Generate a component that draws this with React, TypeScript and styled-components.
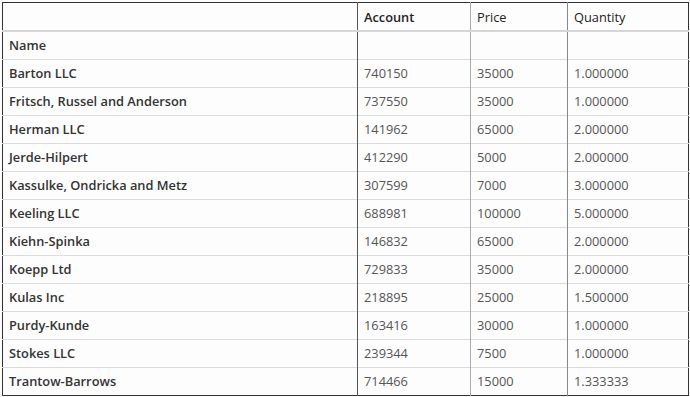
import React from 'react';
import styled, { createGlobalStyle } from 'styled-components';

const GlobalStyle = createGlobalStyle`
  body {
    margin: 0;
    background: #fdfdfd;
    font-family: "Open Sans", "Noto Sans", sans-serif;
  }
`;

const Wrapper = styled.div`
  padding: 2px;
`;

const Table = styled.table`
  width: 686px;
  border-collapse: collapse;
  border: 1px solid #333;
  table-layout: fixed;
  font-size: 12.8px;
`;

const HeadCell = styled.th<{ $strong?: boolean; $line: string }>`
  height: 27px;
  padding: 0 6px;
  text-align: left;
  font-weight: ${(p) => (p.$strong ? 600 : 400)};
  color: #222;
  border-bottom: 2px solid #d6d6d6;
  border-left: 1px solid ${(p) => p.$line};
`;

const Row = styled.tr`
  height: 28px;
  & + & td {
    border-top: 1px solid #dcdcdc;
  }
`;

const NameCell = styled.td`
  padding: 0 6px;
  font-weight: 600;
  color: #333;
`;

const ValueCell = styled.td<{ $line: string }>`
  padding: 0 6px;
  color: #555;
  border-left: 1px solid ${(p) => p.$line};
`;

const rows = [
  ['Barton LLC', '740150', '35000', '1.000000'],
  ['Fritsch, Russel and Anderson', '737550', '35000', '1.000000'],
  ['Herman LLC', '141962', '65000', '2.000000'],
  ['Jerde-Hilpert', '412290', '5000', '2.000000'],
  ['Kassulke, Ondricka and Metz', '307599', '7000', '3.000000'],
  ['Keeling LLC', '688981', '100000', '5.000000'],
  ['Kiehn-Spinka', '146832', '65000', '2.000000'],
  ['Koepp Ltd', '729833', '35000', '2.000000'],
  ['Kulas Inc', '218895', '25000', '1.500000'],
  ['Purdy-Kunde', '163416', '30000', '1.000000'],
  ['Stokes LLC', '239344', '7500', '1.000000'],
  ['Trantow-Barrows', '714466', '15000', '1.333333'],
];

const lines = ['#555', '#aaa', '#888'];

export default function App() {
  return (
    <Wrapper>
      <GlobalStyle />
      <Table>
        <colgroup>
          <col style={{ width: 355 }} />
          <col style={{ width: 113 }} />
          <col style={{ width: 97 }} />
          <col style={{ width: 121 }} />
        </colgroup>
        <thead>
          <tr>
            <HeadCell $line="transparent" style={{ borderLeft: 'none' }}></HeadCell>
            <HeadCell $strong $line={lines[0]}>Account</HeadCell>
            <HeadCell $line={lines[1]}>Price</HeadCell>
            <HeadCell $line={lines[2]}>Quantity</HeadCell>
          </tr>
        </thead>
        <tbody>
          <Row>
            <NameCell>Name</NameCell>
            <ValueCell $line={lines[0]}></ValueCell>
            <ValueCell $line={lines[1]}></ValueCell>
            <ValueCell $line={lines[2]}></ValueCell>
          </Row>
          {rows.map(([name, account, price, qty]) => (
            <Row key={name}>
              <NameCell>{name}</NameCell>
              <ValueCell $line={lines[0]}>{account}</ValueCell>
              <ValueCell $line={lines[1]}>{price}</ValueCell>
              <ValueCell $line={lines[2]}>{qty}</ValueCell>
            </Row>
          ))}
        </tbody>
      </Table>
    </Wrapper>
  );
}
